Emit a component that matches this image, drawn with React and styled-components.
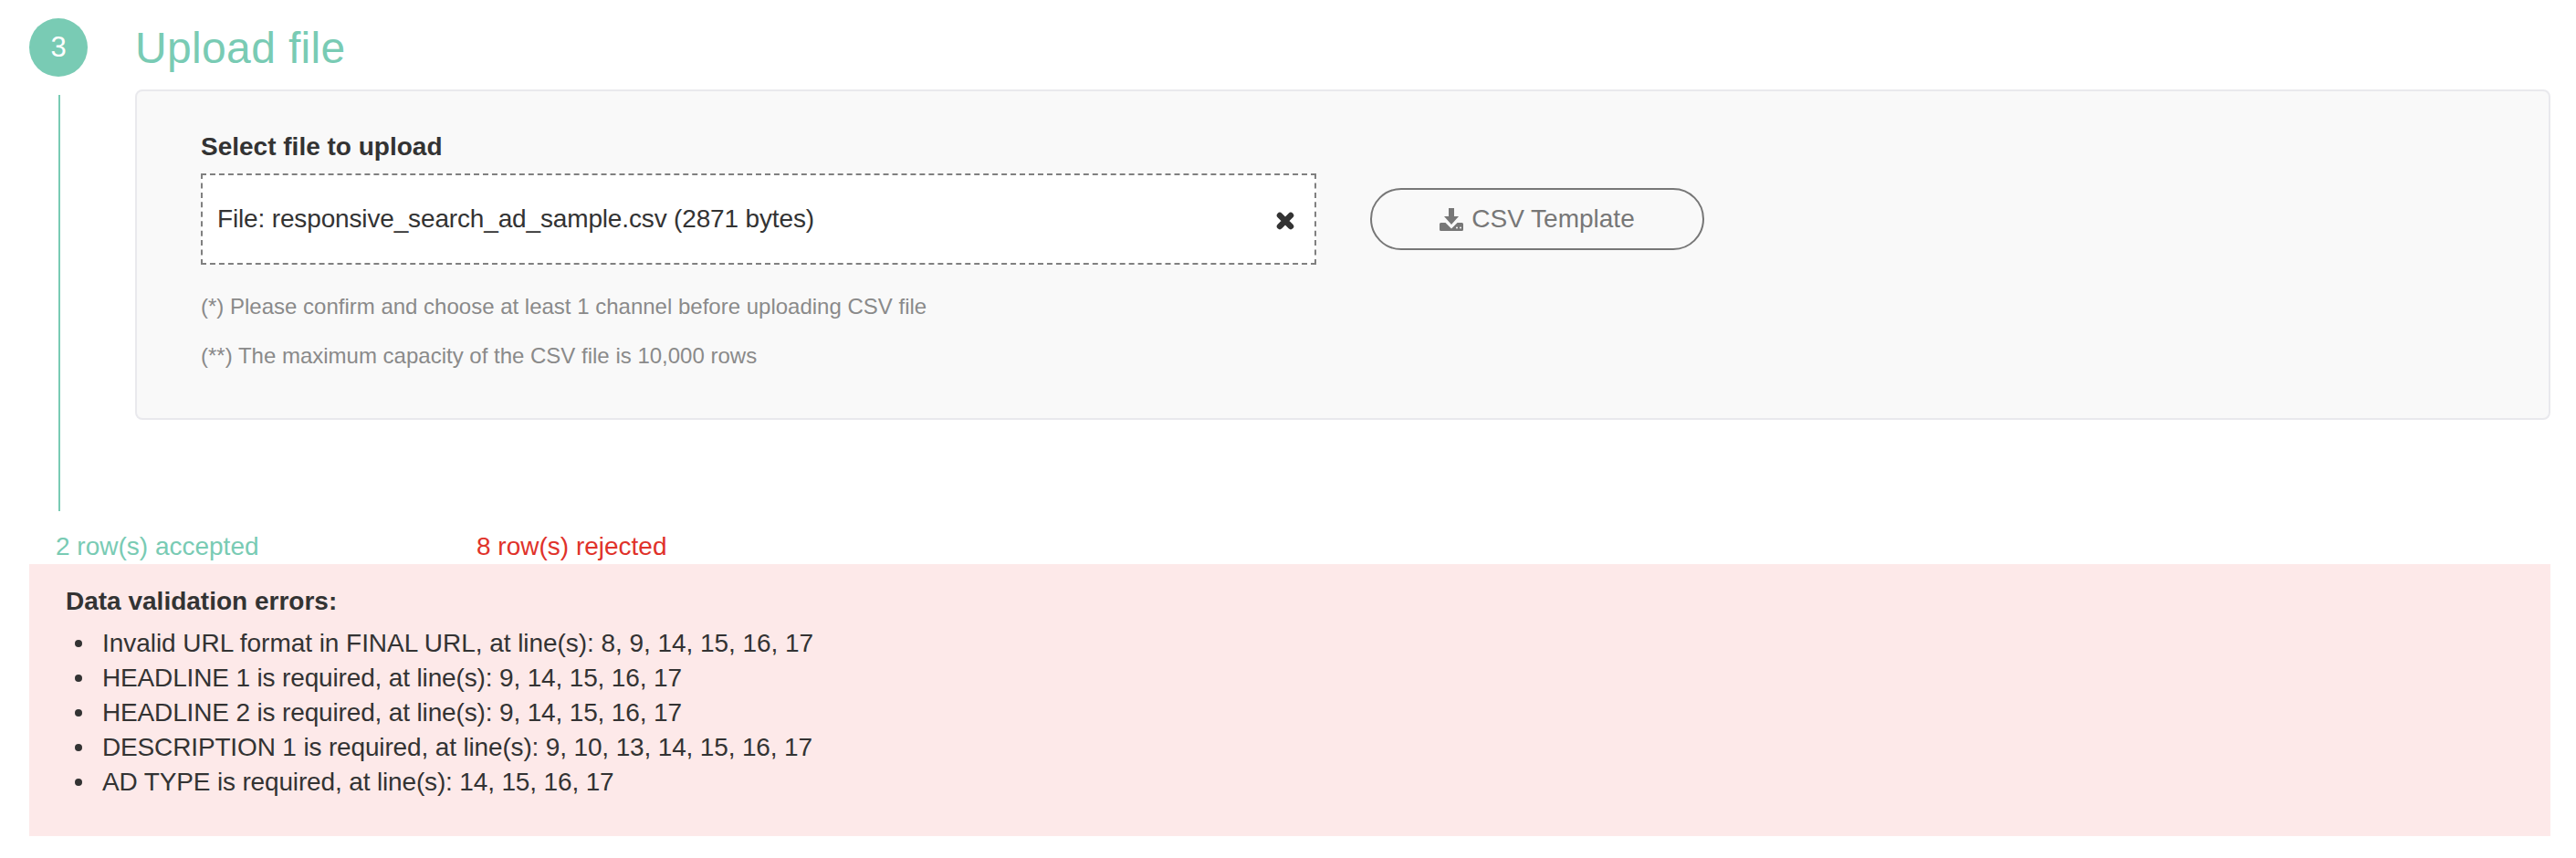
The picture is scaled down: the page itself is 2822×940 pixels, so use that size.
import React from 'react';
import styled, {createGlobalStyle} from 'styled-components';

const teal = '#79cbb4';

const GlobalStyle = createGlobalStyle`
    html, body {
        margin: 0;
        padding: 0;
        background: #fff;
    }

    body {
        font-family: 'Liberation Sans', Arial, sans-serif;
        color: #333;
    }
`

const Page = styled.div`
    box-sizing: border-box;
    width: 2822px;
    height: 940px;
    padding: 20px 28px 0 32px;
    overflow: hidden;
`

const Step = styled.section`
    display: grid;
    grid-template-columns: 64px 1fr;
    column-gap: 52px;
    height: 540px;
`

const Rail = styled.div`
    display: flex;
    flex-direction: column;
    align-items: center;
    gap: 20px;
`

const Badge = styled.div`
    flex: none;
    display: flex;
    align-items: center;
    justify-content: center;
    width: 64px;
    height: 64px;
    border-radius: 50%;
    background: ${teal};
    color: #fff;
    font-size: 31px;
`

const RailLine = styled.div`
    flex: 1;
    width: 2px;
    margin-left: 2px;
    background: ${teal};
`

const Title = styled.h2`
    margin: 0;
    height: 78px;
    color: ${teal};
    font-size: 48px;
    font-weight: 400;
    letter-spacing: 0.35px;
    line-height: 66px;
`

const Panel = styled.div`
    box-sizing: border-box;
    height: 362px;
    padding: 46px 70px 0;
    background: #f9f9f9;
    border: 2px solid #e9e9ed;
    border-radius: 8px;
`

const Label = styled.div`
    height: 44px;
    font-size: 28px;
    font-weight: 700;
    line-height: 30px;
`

const UploadRow = styled.div`
    display: flex;
    align-items: center;
    gap: 59px;
`

const FileBox = styled.div`
    box-sizing: border-box;
    display: flex;
    align-items: center;
    justify-content: space-between;
    width: 1222px;
    height: 100px;
    padding: 0 22px 0 16px;
    background: #fff;
    border: 2px dashed #808080;
    font-size: 28px;
    letter-spacing: -0.15px;
`

const RemoveIcon = styled.svg`
    flex: none;
    width: 20px;
    height: 20px;
    margin-top: 3px;
    stroke: #333;
    stroke-width: 6.5;
    stroke-linecap: round;
`

const TemplateButton = styled.button`
    box-sizing: border-box;
    display: flex;
    align-items: center;
    justify-content: center;
    gap: 9px;
    width: 366px;
    height: 68px;
    padding: 0;
    background: transparent;
    border: 2px solid #777;
    border-radius: 34px;
    color: #777;
    font-family: inherit;
    font-size: 28px;
`

const DownloadIcon = styled.svg`
    flex: none;
    width: 26px;
    height: 25px;
    fill: #777;
`

const Notes = styled.div`
    margin-top: 19px;
    color: #8a8a8a;
    font-size: 24px;
    line-height: 54px;
`

const Counts = styled.div`
    display: grid;
    grid-template-columns: 461px auto;
    justify-content: start;
    height: 58px;
    padding-left: 29px;
    font-size: 28px;
    line-height: 78px;
`

const Count = styled.span`
    color: ${props => props.$rejected ? '#e0322a' : teal};
`

const ErrorBox = styled.div`
    box-sizing: border-box;
    height: 298px;
    padding: 25px 40px 0;
    background: #fde9e9;
    font-size: 28px;
`

const ErrorTitle = styled.div`
    height: 43px;
    font-weight: 700;
    line-height: 32px;
`

const ErrorList = styled.ul`
    margin: 0;
    padding: 0 0 0 10px;
    list-style: none;
    letter-spacing: -0.15px;
    line-height: 38px;
`

const ErrorItem = styled.li`
    display: flex;
    align-items: center;
    gap: 22px;

    &:first-child {
        letter-spacing: -0.05px;
    }

    &::before {
        content: '';
        width: 8px;
        height: 8px;
        border-radius: 50%;
        background: #333;
    }
`

const errors = [
    'Invalid URL format in FINAL URL, at line(s): 8, 9, 14, 15, 16, 17',
    'HEADLINE 1 is required, at line(s): 9, 14, 15, 16, 17',
    'HEADLINE 2 is required, at line(s): 9, 14, 15, 16, 17',
    'DESCRIPTION 1 is required, at line(s): 9, 10, 13, 14, 15, 16, 17',
    'AD TYPE is required, at line(s): 14, 15, 16, 17'
];

const App = () => {
    return (
        <Page>
            <GlobalStyle/>
            <Step>
                <Rail>
                    <Badge>3</Badge>
                    <RailLine/>
                </Rail>
                <div>
                    <Title>Upload file</Title>
                    <Panel>
                        <Label>Select file to upload</Label>
                        <UploadRow>
                            <FileBox>
                                File: responsive_search_ad_sample.csv (2871 bytes)
                                <RemoveIcon viewBox='0 0 20 20'>
                                    <path d='M4 4 16 16M16 4 4 16'/>
                                </RemoveIcon>
                            </FileBox>
                            <TemplateButton>
                                <DownloadIcon viewBox='0 0 26 25'>
                                    <path d='M10 0h6v9h5l-8 9-8-9h5z'/>
                                    <path d='M0 17.5Q0 16 1.5 16H6.5L13 22.5 19.5 16H24.5Q26 16 26 17.5V23.5Q26 25 24.5 25H1.5Q0 25 0 23.5Z'/>
                                    <circle cx='19' cy='21.5' r='1' fill='#f9f9f9'/>
                                    <circle cx='23' cy='21.5' r='1' fill='#f9f9f9'/>
                                </DownloadIcon>
                                CSV Template
                            </TemplateButton>
                        </UploadRow>
                        <Notes>
                            <div>(*) Please confirm and choose at least 1 channel before uploading CSV file</div>
                            <div>(**) The maximum capacity of the CSV file is 10,000 rows</div>
                        </Notes>
                    </Panel>
                </div>
            </Step>
            <Counts>
                <Count>2 row(s) accepted</Count>
                <Count $rejected>8 row(s) rejected</Count>
            </Counts>
            <ErrorBox>
                <ErrorTitle>Data validation errors:</ErrorTitle>
                <ErrorList>
                    {errors.map(error => <ErrorItem key={error}>{error}</ErrorItem>)}
                </ErrorList>
            </ErrorBox>
        </Page>
    );
};

export default App;
